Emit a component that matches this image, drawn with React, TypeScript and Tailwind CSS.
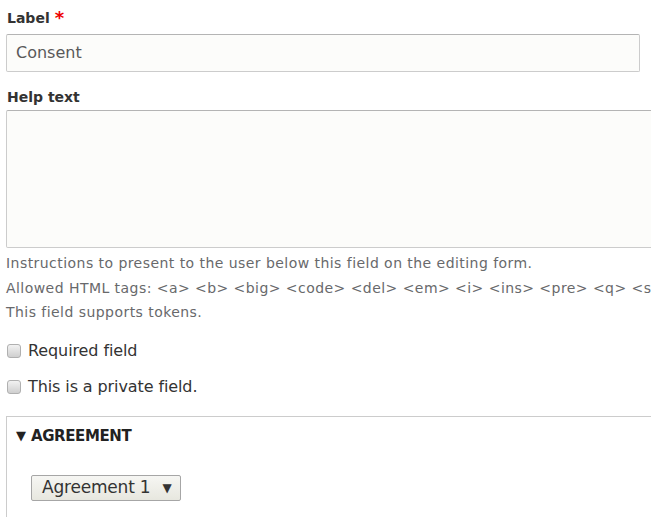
import { useState } from 'react'

const font = { fontFamily: '"DejaVu Sans", "Lucida Grande", sans-serif' }

function Checkbox({ label }: { label: string }) {
  const [checked, setChecked] = useState(false)
  return (
    <label className="flex items-center gap-[7px] text-[16px] leading-[20px] text-[#333]">
      <span
        onClick={() => setChecked(!checked)}
        className="ml-[7px] block h-[14px] w-[14px] rounded-[3px] border border-[#b0b0b0] bg-gradient-to-b from-[#f2f2f2] to-[#cfcfcf]"
      />
      <span className="tracking-[-0.1px]">{label}</span>
    </label>
  )
}

export default function App() {
  return (
    <div className="h-[517px] w-[651px] overflow-hidden bg-white text-[#222]" style={font}>
      {/* Label field */}
      <div className="pt-[6px]">
        <div className="flex items-center pl-[7px] text-[14px] font-bold leading-[24px] text-[#333]">
          Label
          <span className="ml-[5px] text-[18px] font-bold text-[#e00]">*</span>
        </div>
        <div className="ml-[6px] mt-[4px] flex h-[38px] w-[634px] items-center rounded-[2px] border border-[#ccc] border-t-[#b4b4b4] bg-[#fcfcfa] pl-[9px] text-[16px] text-[#595959]">
          Consent
        </div>
      </div>

      {/* Help text */}
      <div className="mt-[13px]">
        <div className="pl-[7px] text-[14px] font-bold leading-[24px] text-[#333]">Help text</div>
        <div className="ml-[6px] mt-[1px] h-[138px] w-[660px] rounded-[2px] border border-[#ccc] border-t-[#b4b4b4] bg-[#fcfcfa]" />
        <div className="mt-[3px] whitespace-nowrap pl-[6px] text-[14px] leading-[24.5px] tracking-[0.45px] text-[#68696b]">
          <div>Instructions to present to the user below this field on the editing form.</div>
          <div>
            {'Allowed HTML tags: <a> <b> <big> <code> <del> <em> <i> <ins> <pre> <q> <small>'}
          </div>
          <div>This field supports tokens.</div>
        </div>
      </div>

      {/* Checkboxes */}
      <div className="mt-[16px] flex flex-col gap-[16px]">
        <Checkbox label="Required field" />
        <Checkbox label="This is a private field." />
      </div>

      {/* Details */}
      <div className="ml-[6px] mt-[19px] h-[120px] w-[660px] border border-[#ccc]">
        <div className="flex items-center gap-[5px] pl-[9px] pt-[9px] text-[15px] font-bold leading-[20px] text-[#222]">
          <span className="text-[13px]">▼</span>
          <span className="tracking-[-0.4px]">AGREEMENT</span>
        </div>
        <div className="ml-[24px] mt-[29px] inline-flex h-[26px] items-center gap-[12px] rounded-[2px] border border-[#a6a6a6] bg-gradient-to-b from-[#f6f6f3] to-[#e7e7df] pl-[10px] pr-[8px] text-[17px] text-[#333]">
          <span className="tracking-[-0.2px]">Agreement 1</span>
          <span className="text-[12px]">▼</span>
        </div>
      </div>
    </div>
  )
}
